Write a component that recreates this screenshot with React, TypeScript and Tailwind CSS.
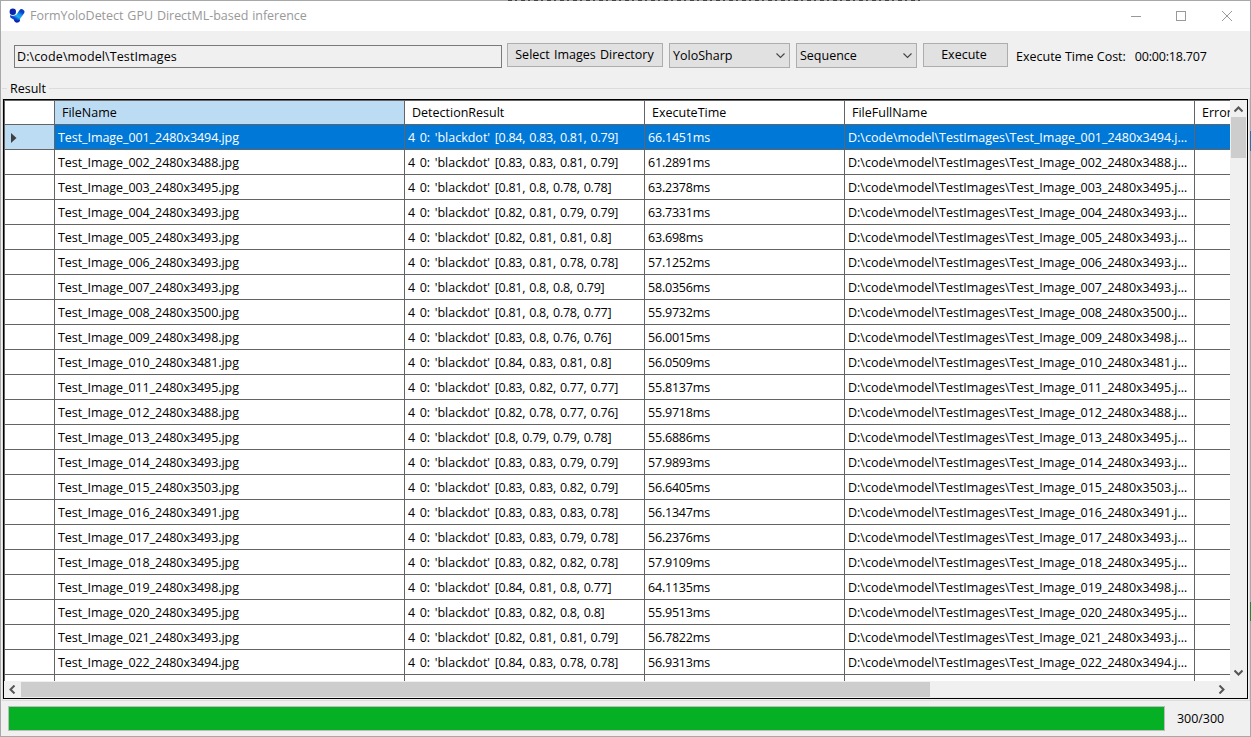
import clsx from "clsx";

const DIRECTORY = "D:\\code\\model\\TestImages";

type Result = {
  size: string;
  scores: string;
  time: string;
};

const results: Result[] = [
  { size: "2480x3494", scores: "0.84, 0.83, 0.81, 0.79", time: "66.1451ms" },
  { size: "2480x3488", scores: "0.83, 0.83, 0.81, 0.79", time: "61.2891ms" },
  { size: "2480x3495", scores: "0.81, 0.8, 0.78, 0.78", time: "63.2378ms" },
  { size: "2480x3493", scores: "0.82, 0.81, 0.79, 0.79", time: "63.7331ms" },
  { size: "2480x3493", scores: "0.82, 0.81, 0.81, 0.8", time: "63.698ms" },
  { size: "2480x3493", scores: "0.83, 0.81, 0.78, 0.78", time: "57.1252ms" },
  { size: "2480x3493", scores: "0.81, 0.8, 0.8, 0.79", time: "58.0356ms" },
  { size: "2480x3500", scores: "0.81, 0.8, 0.78, 0.77", time: "55.9732ms" },
  { size: "2480x3498", scores: "0.83, 0.8, 0.76, 0.76", time: "56.0015ms" },
  { size: "2480x3481", scores: "0.84, 0.83, 0.81, 0.8", time: "56.0509ms" },
  { size: "2480x3495", scores: "0.83, 0.82, 0.77, 0.77", time: "55.8137ms" },
  { size: "2480x3488", scores: "0.82, 0.78, 0.77, 0.76", time: "55.9718ms" },
  { size: "2480x3495", scores: "0.8, 0.79, 0.79, 0.78", time: "55.6886ms" },
  { size: "2480x3493", scores: "0.83, 0.83, 0.79, 0.79", time: "57.9893ms" },
  { size: "2480x3503", scores: "0.83, 0.83, 0.82, 0.79", time: "56.6405ms" },
  { size: "2480x3491", scores: "0.83, 0.83, 0.83, 0.78", time: "56.1347ms" },
  { size: "2480x3493", scores: "0.83, 0.83, 0.79, 0.78", time: "56.2376ms" },
  { size: "2480x3495", scores: "0.83, 0.82, 0.82, 0.78", time: "57.9109ms" },
  { size: "2480x3498", scores: "0.84, 0.81, 0.8, 0.77", time: "64.1135ms" },
  { size: "2480x3495", scores: "0.83, 0.82, 0.8, 0.8", time: "55.9513ms" },
  { size: "2480x3493", scores: "0.82, 0.81, 0.81, 0.79", time: "56.7822ms" },
  { size: "2480x3494", scores: "0.84, 0.83, 0.78, 0.78", time: "56.9313ms" },
];

const columns = "grid grid-cols-[50px_350px_240px_200px_350px_200px]";

function Logo() {
  return (
    <svg width="16" height="16" viewBox="0 0 16 16">
      <defs>
        <linearGradient id="arm" x1="1" y1="0" x2="0.2" y2="1">
          <stop offset="0" stopColor="#0a3fc8" />
          <stop offset="0.35" stopColor="#1690e8" />
          <stop offset="0.65" stopColor="#18b4ec" />
          <stop offset="1" stopColor="#0b3fd0" />
        </linearGradient>
      </defs>
      <path d="M4 8 L8 10.5 L12.6 4" stroke="url(#arm)" strokeWidth="5.6" strokeLinecap="round" strokeLinejoin="round" fill="none" />
      <circle cx="3.9" cy="3.9" r="3.8" fill="#fff" />
      <circle cx="3.8" cy="3.7" r="3.2" fill="#0b23a9" />
      <path d="M5 11.6 Q8 13.4 11 11.2 A3.1 3.1 0 0 1 5 12.6 Z" fill="#0b23b4" />
    </svg>
  );
}

function Chevron({ className, bold }: { className?: string; bold?: boolean }) {
  return (
    <svg width="9" height="9" viewBox="0 0 9 9" className={className}>
      <path d="M0.5 2.5 L4.5 6.5 L8.5 2.5" stroke={bold ? "#555" : "#444"} strokeWidth={bold ? 2 : 1.1} fill="none" />
    </svg>
  );
}

function Select({ value }: { value: string }) {
  return (
    <div className="ml-[6px] flex h-[25px] w-[121px] items-center justify-between border border-[#adadad] bg-[#e1e1e1] pr-1 pl-[3px]">
      <span className="pt-[2px]">{value}</span>
      <Chevron />
    </div>
  );
}

function TitleBar() {
  return (
    <header className="flex h-[30px] shrink-0 items-center bg-white pl-2 text-[#999]">
      <Logo />
      <h1 className="ml-[5px] pt-px tracking-[-0.03px] [word-spacing:0.7px]">FormYoloDetect GPU DirectML-based inference</h1>
      <svg width="110" height="12" viewBox="0 0 110 12" className="mr-[13px] ml-auto" fill="none" stroke="#999">
        <path d="M4 6.5 H14" />
        <rect x="49.5" y="1.5" width="9" height="9" />
        <path d="M95 1 L105 11 M105 1 L95 11" />
      </svg>
    </header>
  );
}

function Toolbar() {
  return (
    <div className="flex h-[37px] items-start pt-3 pl-[13px]">
      <div className="mt-[2px] flex h-[23px] w-[488px] items-center border border-[#7a7a7a] bg-[#f0f0f0] pt-[2px] pl-[2px] tracking-[0.11px]">
        {DIRECTORY}
      </div>
      <button className="ml-[5px] h-6 w-[156px] border border-[#adadad] bg-[#e1e1e1] pr-px leading-[22px] [word-spacing:1px]">
        Select Images Directory
      </button>
      <Select value="YoloSharp" />
      <Select value="Sequence" />
      <button className="ml-[6px] h-6 w-[85px] border border-[#adadad] bg-[#e1e1e1] pr-[3px] leading-[22px]">
        Execute
      </button>
      <span className="mt-[5px] ml-2 leading-[18px]">Execute Time Cost:</span>
      <span className="mt-[5px] ml-[9px] leading-[18px] tracking-[-0.2px]">00:00:18.707</span>
    </div>
  );
}

function HeaderCell({ children, active }: { children?: React.ReactNode; active?: boolean }) {
  return (
    <div className={clsx("h-[23px] border-r border-[#646464] pl-[7px] leading-[23px]", active && "bg-[#bcdcf4]")}>
      {children}
    </div>
  );
}

function Cell({ children, className }: { children?: React.ReactNode; className?: string }) {
  return (
    <div className={clsx("truncate border-r border-[#646464] pt-px pr-[6px] pl-[3px] leading-6", className)}>
      {children}
    </div>
  );
}

function ResultGrid() {
  return (
    <div className="flex h-[580px] w-[1225px] flex-col overflow-hidden bg-white">
      <div className={clsx(columns, "w-[1390px] shrink-0 border-b border-[#646464]")}>
        <HeaderCell />
        <HeaderCell active>FileName</HeaderCell>
        <HeaderCell>DetectionResult</HeaderCell>
        <HeaderCell>ExecuteTime</HeaderCell>
        <HeaderCell>FileFullName</HeaderCell>
        <HeaderCell>Error</HeaderCell>
      </div>
      {results.map((row, i) => {
        const name = `Test_Image_${String(i + 1).padStart(3, "0")}_${row.size}.jpg`;
        return (
          <div
            key={name}
            className={clsx(columns, "h-[25px] w-[1390px] shrink-0 border-b border-[#646464]", i === 0 && "bg-[#0078d7] text-white")}
          >
            <div className={clsx("flex items-center border-r border-[#646464] pt-[2px] pl-[6px]", i === 0 && "bg-[#bcdcf4]")}>
              {i === 0 && (
                <svg width="6" height="10" viewBox="0 0 6 10">
                  <path d="M0 0 L5.5 5 L0 10 Z" fill="#404040" />
                </svg>
              )}
            </div>
            <Cell className="tracking-[-0.06px]">{name}</Cell>
            <Cell>
              <span className="[word-spacing:1.3px]">4 0: 'blackdot' </span>
              <span className="tracking-[-0.25px] [word-spacing:1px]">[{row.scores}]</span>
            </Cell>
            <Cell className="tracking-[-0.2px]">{row.time}</Cell>
            <Cell className="tracking-[-0.01px]">{`${DIRECTORY}\\${name}`}</Cell>
            <Cell />
          </div>
        );
      })}
      <div className={clsx(columns, "h-[7px] w-[1390px] shrink-0")}>
        <Cell />
        <Cell />
        <Cell />
        <Cell />
        <Cell />
        <Cell />
      </div>
    </div>
  );
}

export default function App() {
  return (
    <div className="relative h-[737px] w-[1251px] overflow-hidden font-['Open_Sans','Noto_Sans',sans-serif] text-[12.5px] whitespace-nowrap text-black">
      <div className="flex h-full flex-col border border-[#a8a8a8] bg-[#f0f0f0]">
        <TitleBar />
        <Toolbar />
        <div className="mt-[10px] flex h-5 items-center pl-px">
          <span className="h-px w-[5px] bg-[#dcdcdc]" />
          <span className="px-[3px] pt-[2px]">Result</span>
          <span className="h-px flex-1 bg-[#dcdcdc]" />
        </div>
        <div className="ml-px h-[603px] w-[1248px] border-x border-b border-[#dcdcdc] pt-px">
          <div className="flex h-[600px] w-[1245px] flex-col border border-black">
            <div className="flex h-[581px]">
              <div className="border-t border-l border-[#646464]">
                <ResultGrid />
              </div>
              <div className="flex flex-1 flex-col items-center pt-px pr-px">
                <Chevron bold className="mt-1 rotate-180" />
                <div className="mt-[3px] h-[41px] w-[15px] bg-[#cdcdcd]" />
                <Chevron bold className="mt-auto mb-1" />
              </div>
            </div>
            <div className="mt-px flex h-[15px] items-center">
              <Chevron bold className="ml-1 rotate-90" />
              <div className="ml-1 h-[15px] w-[909px] bg-[#cdcdcd]" />
              <Chevron bold className="mr-[21px] ml-auto -rotate-90" />
            </div>
          </div>
        </div>
        <div className="mt-[5px] flex items-center">
          <div className="ml-[7px] h-[25px] w-[1157px] border border-[#bcbcbc] bg-[#06b025]" />
          <span className="ml-3 pt-px tracking-[-0.05px]">300/300</span>
        </div>
      </div>
      {/* slivers of the window behind */}
      <div className="absolute top-0 left-[508px] h-px w-[412px] bg-[repeating-linear-gradient(90deg,#444_0_4px,#a8a8a8_4px_7px,#444_7px_9px,#a8a8a8_9px_13px)]" />
      <div className="absolute top-[131px] right-0 h-5 w-px bg-[#2a6fa8]" />
      <div className="absolute top-[602px] right-0 h-[19px] w-px bg-[#1c8a35]" />
    </div>
  );
}
